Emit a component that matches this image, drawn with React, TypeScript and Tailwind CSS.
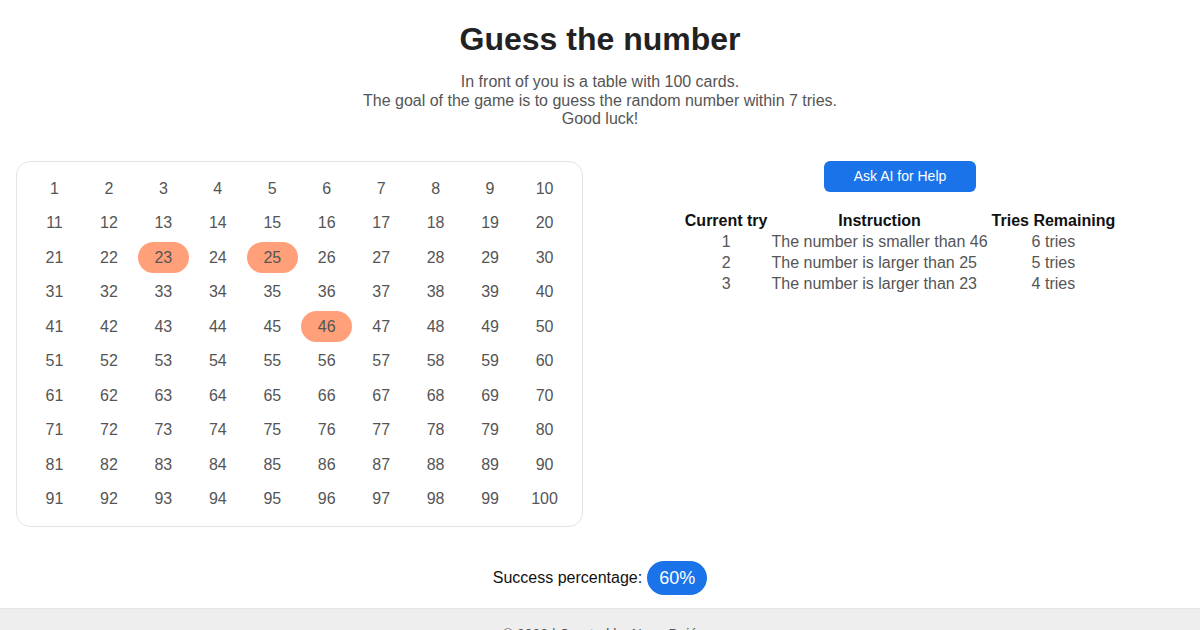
import React from "react";

const highlighted = new Set([23, 25, 46]);

const rows = [
  { n: 1, text: "The number is smaller than 46", tries: "6 tries" },
  { n: 2, text: "The number is larger than 25", tries: "5 tries" },
  { n: 3, text: "The number is larger than 23", tries: "4 tries" },
];

export default function App() {
  const nums = Array.from({ length: 100 }, (_, i) => i + 1);
  return (
    <div className="w-[1200px] h-[630px] overflow-hidden bg-white font-['Liberation_Sans',Arial,sans-serif]">
      <h1 className="pt-[21px] text-center text-[32px] leading-[37px] font-bold text-[#222]">
        Guess the number
      </h1>
      <p className="mt-[15px] text-center text-[16px] leading-[18.5px] text-[#555]">
        In front of you is a table with 100 cards.
        <br />
        The goal of the game is to guess the random number within 7 tries.
        <br />
        Good luck!
      </p>
      <div className="mt-[32px] flex">
        <div className="w-[600px] pl-[16px]">
          <div className="w-[567px] rounded-[14px] border border-[#e4e4e4] p-[12px]">
            <div className="grid grid-cols-10 gap-x-[3.5px] gap-y-[3.45px]">
              {nums.map((n) => (
                <div
                  key={n}
                  className={
                    highlighted.has(n)
                      ? "flex h-[31px] items-center justify-center rounded-full bg-[#ffa07a] text-[16px] text-[#555]"
                      : "flex h-[31px] items-center justify-center rounded-full text-[16px] text-[#555]"
                  }
                >
                  {n}
                </div>
              ))}
            </div>
          </div>
        </div>
        <div className="flex flex-1 flex-col items-center">
          <button className="flex h-[31px] w-[152px] items-center justify-center rounded-[6px] bg-[#1a73e8] text-[14px] text-white">
            Ask AI for Help
          </button>
          <table className="mt-[18px] border-collapse text-[16px]">
            <thead>
              <tr>
                <th className="px-[2px] leading-[21px] font-bold text-[#111]">Current try</th>
                <th className="px-[2px] leading-[21px] font-bold text-[#111]">Instruction</th>
                <th className="px-[2px] leading-[21px] font-bold text-[#111]">Tries Remaining</th>
              </tr>
            </thead>
            <tbody>
              {rows.map((r) => (
                <tr key={r.n}>
                  <td className="px-[2px] text-center leading-[21.4px] text-[#555]">{r.n}</td>
                  <td className="px-[2px] text-left leading-[21.4px] text-[#555]">{r.text}</td>
                  <td className="px-[2px] text-center leading-[21.4px] text-[#555]">{r.tries}</td>
                </tr>
              ))}
            </tbody>
          </table>
        </div>
      </div>
      <div className="mt-[34px] flex items-center justify-center gap-[5px]">
        <span className="text-[16px] text-[#111]">Success percentage:</span>
        <span className="flex h-[34px] items-center rounded-full bg-[#1a73e8] px-[12px] text-[18px] text-white">
          60%
        </span>
      </div>
      <footer className="mt-[13px] border-t border-[#e6e6e6] bg-[#eeeeee] pt-[17px] pb-[15px] text-center text-[14px] leading-[16px] text-[#555]">
        © 2023 | Created by Nagy Dajó
      </footer>
    </div>
  );
}
